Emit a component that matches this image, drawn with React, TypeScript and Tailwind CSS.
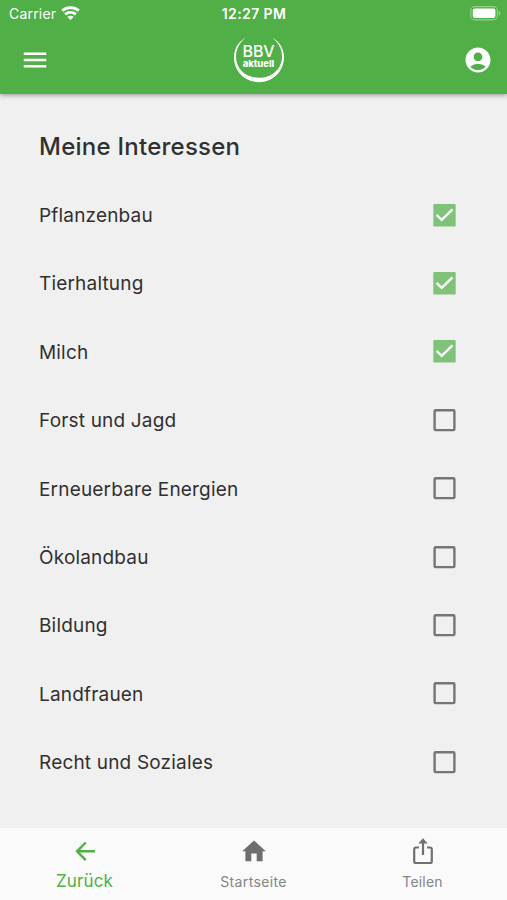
import { ReactNode } from "react";
import { MdAccountCircle, MdMenu } from "react-icons/md";

interface Interest {
  name: string;
  checked: boolean;
}

const interests: Interest[] = [
  { name: "Pflanzenbau", checked: true },
  { name: "Tierhaltung", checked: true },
  { name: "Milch", checked: true },
  { name: "Forst und Jagd", checked: false },
  { name: "Erneuerbare Energien", checked: false },
  { name: "Ökolandbau", checked: false },
  { name: "Bildung", checked: false },
  { name: "Landfrauen", checked: false },
  { name: "Recht und Soziales", checked: false },
];

function Wifi() {
  return (
    <svg className="ml-[5px] h-[15px] w-[19px]" viewBox="0 0 19 15" fill="none" stroke="white" strokeWidth="2.9">
      <path d="M1.2 4.7C5.8 .6 13.2 .6 17.8 4.7" />
      <path d="M4.2 8.4C7.3 5.7 11.7 5.7 14.8 8.4" />
      <path d="M6.4 10.9C8.2 9.4 10.8 9.4 12.6 10.9L9.5 14Z" fill="white" stroke="none" />
    </svg>
  );
}

function Battery() {
  return (
    <svg className="h-[15px] w-[31px]" viewBox="0 0 31 15" fill="none">
      <rect x=".8" y=".6" width="26.6" height="13.3" rx="4" stroke="white" strokeOpacity=".4" strokeWidth="1.1" />
      <rect x="2.8" y="2.6" width="22.6" height="9.3" rx="2" fill="white" />
      <path d="M28.8 5V9.6C30.8 8.7 30.8 5.9 28.8 5Z" fill="white" fillOpacity=".45" />
    </svg>
  );
}

function Logo() {
  return (
    <div className="relative -mr-[4px] mb-[2px] h-[48px] w-[52px] text-center text-white">
      <svg className="absolute inset-0 h-[48px] w-[52px]" viewBox="0 0 52 48">
        <path
          d="M12.8 2.4C4.6 7.2 1 14.4 1 22.3C1 36.3 12 47.2 26 47.2C40 47.2 51 36.3 51 22.3C51 14.4 47.4 7.2 39.2 2.4C45.8 8 49 14.3 49 21.5C49 34 39 42.8 26 42.8C13 42.8 3 34 3 21.5C3 14.3 6.2 8 12.8 2.4Z"
          fill="white"
        />
      </svg>
      <div className="relative pt-[8px] text-[16px] leading-[16px] font-medium tracking-[-0.1px]">BBV</div>
      <div className="relative mt-[1px] text-[9.4px] leading-[8px] font-extrabold">aktuell</div>
    </div>
  );
}

function Checkbox({ checked }: { checked: boolean }) {
  return (
    <svg className="h-[23px] w-[23px]" viewBox="0 0 23 23" fill="none">
      {checked ? (
        <>
          <rect x=".3" y="0" width="22.4" height="22.4" rx="1.2" fill="#7fc37b" />
          <path d="M3.5 10.9L8.7 15.9L19.5 5.3" stroke="white" strokeWidth="2.4" />
        </>
      ) : (
        <rect x="1.6" y="1.3" width="19.8" height="19.8" rx="1" stroke="#757575" strokeWidth="2.4" />
      )}
    </svg>
  );
}

function Tab({ icon, children }: { icon: ReactNode; children: ReactNode }) {
  return (
    <div className="flex flex-1 flex-col items-center">
      {icon}
      {children}
    </div>
  );
}

export default function App() {
  return (
    <div className="flex h-[900px] w-[507px] flex-col overflow-hidden bg-[#f0f0f0] font-['Inter',sans-serif] text-[#303030]">
      <header className="h-[94px] shrink-0 bg-[#51af47] text-white shadow-[0_1px_5px_rgba(0,0,0,0.4)]">
        <div className="grid h-[27px] grid-cols-3 items-center pr-[6px] pl-[9px]">
          <div className="flex items-center text-[14px] tracking-[0.2px]">
            Carrier
            <Wifi />
          </div>
          <span className="pr-[2px] text-center text-[14px] font-semibold tracking-[0.4px]">12:27 PM</span>
          <div className="flex justify-end">
            <Battery />
          </div>
        </div>
        <div className="flex h-[65px] items-center justify-between pr-[14px] pl-[20px]">
          <MdMenu className="h-[30px] w-[30px]" />
          <Logo />
          <MdAccountCircle className="h-[30px] w-[30px]" />
        </div>
      </header>

      <main className="flex-1 pr-[51px] pl-[39px]">
        <h1 className="mt-[37px] h-[50px] text-[24px] leading-[32px] font-medium tracking-[0.25px]">Meine Interessen</h1>
        {interests.map(({ name, checked }) => (
          <div key={name} className="flex h-[68.4px] items-center justify-between">
            <span className="pt-[2px] text-[19px] tracking-[0.18px]">{name}</span>
            <Checkbox checked={checked} />
          </div>
        ))}
      </main>

      <nav className="flex h-[72px] shrink-0 bg-[#fafafa] pt-[8px] text-[#757575]">
        <Tab
          icon={
            <svg className="h-[30px] w-[30px]" viewBox="0 0 30 30" fill="none" stroke="#51af47" strokeWidth="2.4">
              <path d="M25 15.3H7M15.8 6.5L7 15.3L15.8 24.1" />
            </svg>
          }
        >
          <span className="mt-[4px] text-[17px] leading-[22px] tracking-[0.1px] text-[#51af47]">Zurück</span>
        </Tab>
        <Tab
          icon={
            <svg className="h-[30px] w-[30px]" viewBox="0 0 30 30" fill="#6e6e6e">
              <path d="M15 4.4L26.8 15.2H23.6V25.2H17.7V17.6H12.3V25.2H6.4V15.2H3.2Z" />
            </svg>
          }
        >
          <span className="mt-[5px] text-[14px] leading-[22px] tracking-[0.35px] text-[#858585]">Startseite</span>
        </Tab>
        <Tab
          icon={
            <svg className="h-[30px] w-[30px]" viewBox="0 0 30 30" fill="none" stroke="#707070" strokeWidth="2.2">
              <path d="M11 11.5H8Q6.2 11.5 6.2 13.3V25.2Q6.2 27 8 27H22Q23.8 27 23.8 25.2V13.3Q23.8 11.5 22 11.5H19M15 19V4" />
              <path d="M10.3 7.5L15 2.3L19.7 7.5Z" fill="#707070" stroke="none" />
            </svg>
          }
        >
          <span className="mt-[5px] text-[14px] leading-[22px] tracking-[0.2px] text-[#858585]">Teilen</span>
        </Tab>
      </nav>
    </div>
  );
}
